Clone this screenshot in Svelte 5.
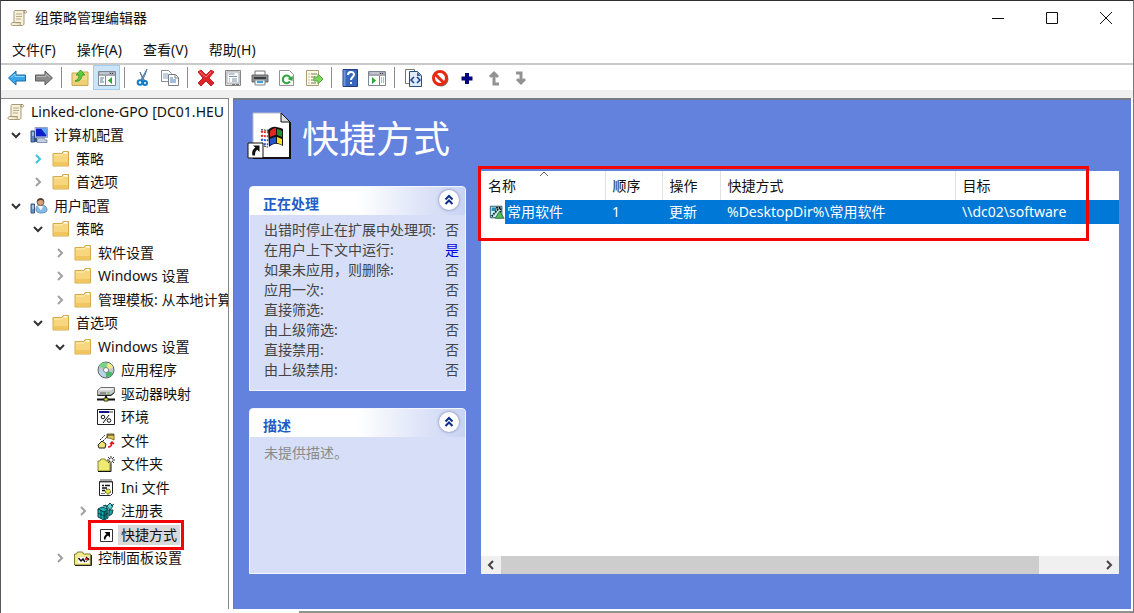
<script lang="ts">
  type Node = { label: string; icon: string; level: number; state?: 'open' | 'closed' | 'hover' };

  const menus = ['文件(F)', '操作(A)', '查看(V)', '帮助(H)'];

  const tools = [
    [['back', '后退'], ['forward', '前进']],
    [['up-folder', '上一级'], ['tree-pane', '显示/隐藏控制台树']],
    [['cut', '剪切'], ['copy', '复制']],
    [['delete', '删除'], ['props', '属性'], ['print', '打印'], ['refresh', '刷新'], ['export', '导出列表']],
    [['help', '帮助'], ['action-pane', '显示/隐藏操作窗格']],
    [['xml', '显示 XML'], ['stop', '禁用'], ['plus', '新建'], ['move-up', '上移'], ['move-down', '下移']]
  ];

  const tree: Node[] = [
    { label: 'Linked-clone-GPO [DC01.HEU', icon: 'scroll', level: 0 },
    { label: '计算机配置', icon: 'computer', level: 1, state: 'open' },
    { label: '策略', icon: 'folder', level: 2, state: 'hover' },
    { label: '首选项', icon: 'folder', level: 2, state: 'closed' },
    { label: '用户配置', icon: 'user', level: 1, state: 'open' },
    { label: '策略', icon: 'folder', level: 2, state: 'open' },
    { label: '软件设置', icon: 'folder', level: 3, state: 'closed' },
    { label: 'Windows 设置', icon: 'folder', level: 3, state: 'closed' },
    { label: '管理模板: 从本地计算', icon: 'folder', level: 3, state: 'closed' },
    { label: '首选项', icon: 'folder', level: 2, state: 'open' },
    { label: 'Windows 设置', icon: 'folder', level: 3, state: 'open' },
    { label: '应用程序', icon: 'disc', level: 4 },
    { label: '驱动器映射', icon: 'drive', level: 4 },
    { label: '环境', icon: 'env', level: 4 },
    { label: '文件', icon: 'file', level: 4 },
    { label: '文件夹', icon: 'new-folder', level: 4 },
    { label: 'Ini 文件', icon: 'ini', level: 4 },
    { label: '注册表', icon: 'registry', level: 4, state: 'closed' },
    { label: '快捷方式', icon: 'shortcut', level: 4 },
    { label: '控制面板设置', icon: 'control', level: 3, state: 'closed' }
  ];

  const processing = [
    ['出错时停止在扩展中处理项:', '否'],
    ['在用户上下文中运行:', '是'],
    ['如果未应用，则删除:', '否'],
    ['应用一次:', '否'],
    ['直接筛选:', '否'],
    ['由上级筛选:', '否'],
    ['直接禁用:', '否'],
    ['由上级禁用:', '否']
  ];

  let selected = $state(18);
  let showProcessing = $state(true);
  let showDescription = $state(true);
</script>

{#snippet icon(name: string)}
  <svg class="icon" viewBox="0 0 18 18" aria-hidden="true">
    {#if name === 'scroll'}
      <path d="M5 1.5h10.5c1.5 0 1.8 2.5 0 2.5h-1.500v10c0 2-1 2.500-2 2.500H2.500c-2 0-1.800-3 0-3H4V3.500c0-1.200.4-2 1-2z" fill="#f6efd9" stroke="#a99b78" />
      <path d="M2.500 13.500h8c-.6 1.500 0 3 1 3" fill="#e4d8b5" stroke="#a99b78" />
      <path d="M6 5h6M6 7.500h6M6 10h5" stroke="#b9ac8a" />
      <path d="M14 4V2.500c0-.6.6-1 1.200-1" fill="none" stroke="#7d7460" />
    {:else if name === 'folder'}
      <path d="M1 3.500h9l1-2h5.500v14.500H1z" fill="#f7d67d" stroke="#d4aa4b" />
      <path d="M2 5h8l1.500-1.500H16" fill="none" stroke="#fff0bc" />
      <path d="M2 12h14v3.500H2z" fill="#f0c660" />
      <path d="M12 2.500h3" stroke="#fff" />
    {:else if name === 'computer'}
      <path d="M5 1.500h12.500v10H5z" fill="#d9e3f0" stroke="#8fa2c4" />
      <path d="M6 2.500h10.500v8H6z" fill="#0b20c8" />
      <path d="M11 2.500h5.500v7z" fill="#5daeff" />
      <path d="M8 12h6l1 2h2v2.500H7V13h1z" fill="#c3cfdf" stroke="#8495b3" />
      <path d="M1 5h3.500v11H1z" fill="#5e85bb" stroke="#324f80" />
      <path d="M2 7h2M2 9h2" stroke="#dcecff" />
      <path d="M5 12h2v4H5z" fill="#38527b" />
    {:else if name === 'user'}
      <path d="M6 13c0-4 2-5 5-5s6 1.500 6 5c0 4-11 4-11 0z" fill="#8ab8e4" stroke="#5d92c4" />
      <circle cx="10.500" cy="5" r="3.500" fill="#d1a279" stroke="#806450" />
      <path d="M7 5c0-5 7.500-5 7 0-1-2-4-3-7 0z" fill="#493a31" />
      <path d="M1 7h3.500v9H1z" fill="#6993c4" stroke="#365983" />
      <path d="M2 9h2M2 11h2" stroke="#e7f4ff" />
      <path d="m8 9 3 4 2-4" fill="#fff" stroke="#d8edff" />
    {:else if name === 'disc'}
      <circle cx="9" cy="9" r="8" fill="#bdc8cb" stroke="#59666a" />
      <path d="M9 9 2 5c2-4 6-4 8-3z" fill="#73d487" />
      <path d="m9 9 2-7c4 1 5 4 5 5z" fill="#eee985" />
      <path d="m9 9 7 3c-2 4-5 4-7 4z" fill="#49b764" />
      <path d="m9 9-1 7c-4-1-6-4-6-6z" fill="#b6d4ea" />
      <circle cx="9" cy="9" r="2.500" fill="#fff" stroke="#78858a" />
    {:else if name === 'drive'}
      <path d="m4 2.500-3.500 3v4.500h13.500l3.500-3V2.500z" fill="#c9c9c9" stroke="#6c6c6c" />
      <path d="m4 3-2.500 2.500H14L17 3z" fill="#eee" />
      <path d="M.5 10.500H14l3.500-3" fill="none" stroke="#222" />
      <path d="M3 8h6" stroke="#555" /><path d="M10.500 8h2" stroke="#20b720" />
      <path d="M9 11v3M0 14.500h18" stroke="#111" stroke-width="2" />
      <path d="M7 13h4v3H7z" fill="#d8d833" stroke="#333" />
    {:else if name === 'env'}
      <path d="M.5 1.500h17v15H.5z" fill="#fff" stroke="#222" />
      <path d="M2 3h10v2H2z" fill="#10108c" /><path d="M12 3h4v2h-4z" fill="#999" />
      <path d="m12 7-6 8" stroke="#111" /><circle cx="6" cy="9" r="1.800" fill="none" stroke="#111" /><circle cx="12" cy="12.500" r="1.800" fill="none" stroke="#111" />
    {:else if name === 'file'}
      <path d="M1 13 5 9l4 3-1 4H2z" fill="#eee577" stroke="#222" />
      <path d="M10 2h7v6l-4-2h-3z" fill="#e7cf55" stroke="#806b25" />
      <path d="m3 8 5-5M6 9l5-5" fill="none" stroke="#222" stroke-dasharray="2 1" />
      <path d="M11 15c4 0 4-3 4-5m-2 2 2-2 2 2" fill="none" stroke="#e01313" stroke-width="1.500" />
      <path d="M10 3h7" stroke="#333" />
    {:else if name === 'new-folder'}
      <path d="M1 6h2l1-2h4l1 2h4v10H1z" fill="#eeea75" stroke="#88872c" />
      <path d="M1 16.500h13V9" fill="none" stroke="#111" />
      <path d="M14 1v8M10 5h8M11 2l6 6M17 2l-6 6" stroke="#333" />
      <circle cx="14" cy="5" r="1.500" fill="#fff" />
    {:else if name === 'ini'}
      <path d="M2.500 2.500h13v12l-2 2h-11z" fill="#fff" stroke="#222" />
      <path d="M4 0v4M6 0v4M8 0v4M10 0v4M12 0v4M14 0v4" stroke="#555" />
      <path d="M5 6.500h2M8 6.500h5M5 9h5M5 11.500h3" stroke="#111" stroke-width="1.500" />
      <circle cx="11" cy="12.500" r="2.500" fill="#e6e33c" stroke="#333" stroke-dasharray="2 1" /><path d="M4 14.500h4" stroke="#777" />
    {:else if name === 'registry'}
      <path d="m1 7 4-2 6 2v9l-4 2-6-3z" fill="#18b5b5" stroke="#063f45" />
      <path d="M7 10 11 7v9l-4 2z" fill="#0c6f76" />
      <path d="m1 7 6 3 4-3M7 10v8M4 8v8M1 11l6 3 4-3" fill="none" stroke="#053c42" />
      <path d="m10 4 3-3 3 3-3 4z" fill="#5ed7d7" stroke="#134c52" />
      <path d="m14 4 3-2M12 8l4 0-1 4-3 2z" fill="#18a5a5" stroke="#084a50" />
      <path d="m6 4 3-1 1 3" fill="#18a5a5" stroke="#084a50" />
    {:else if name === 'shortcut'}
      <path d="M3.500 3.500h12v12h-12z" fill="#fff" stroke="#333" />
      <path d="M7.500 6H13v5.500l-2-2c-1.500 1-2.500 2-2.500 4H7c-.5-2.500.5-4 2.500-5.500z" fill="#000" />
    {:else if name === 'control'}
      <path d="M.5 5h2l1-2h5l1 2h7v11H.5z" fill="#f3ea8a" stroke="#7d7a35" />
      <path d="M1 16.500h16.500V6" fill="none" stroke="#222" />
      <path d="M4 8h11v6H4z" fill="#fff" />
      <path d="m4.500 9 2.500 3 2-2 2 3M12 8l3 3" fill="none" stroke="#111" stroke-width="1.500" />
      <path d="M11 9h2v2h-2z" fill="#df2727" /><path d="m12 13 3-4" stroke="#333" />
    {:else if name === 'back' || name === 'forward'}
      {#if name === 'back'}
        <path d="M0.500 9 8 2v4h9.500v6H8v4z" fill="#37a5e8" stroke="#1b6da9" />
        <path d="M3 8.500 7 5v2.500h9.500" fill="none" stroke="#8ed5fb" />
      {:else}
        <path d="M17.500 9 10 2v4H.5v6H10v4z" fill="#8b8b8b" stroke="#5c5c5c" />
        <path d="M15 8.500 11 5v2.500H1.500" fill="none" stroke="#b9b9b9" />
      {/if}
    {:else if name === 'up-folder'}
      <path d="M1 4h7l1-1h8v13.500H1z" fill="#f3d98a" stroke="#c9a654" />
      <path d="M2 11h14v5H2z" fill="#eecf74" />
      <path d="M4 12c3-1 4-3 4-6H5l4.500-5L14 6h-3c0 4-3 7-7 6z" fill="#5fce3e" stroke="#3d9c2c" />
    {:else if name === 'tree-pane' || name === 'action-pane'}
      <path d="M.5 2.500h17v14H.5z" fill="#fff" stroke="#7c8590" />
      <path d="M1 3h16v4H1z" fill="#a1a9b3" /><path d="M2 4h9" stroke="#dce1e6" /><path d="M12 4.500h4" stroke="#444" stroke-dasharray="1 1" />
      {#if name === 'tree-pane'}
        <path d="M7.500 7v9" stroke="#7c8590" /><path d="M2 9h4M2 11h3M2 13h4" stroke="#55799e" /><path d="M14 8v7l-4-3.500z" fill="#2ca630" />
      {:else}
        <path d="M11.500 7v9" stroke="#7c8590" /><path d="M13 9h3M13 11h3M13 13h3" stroke="#397ab6" stroke-dasharray="1 1" /><path d="M4 8v7l4-3.500z" fill="#2ca630" />
      {/if}
    {:else if name === 'cut'}
      <path d="m13 0-2 6-3 6-1-1zM6 3l2 4 3 5-2-1z" fill="#8cacc7" stroke="#567c9d" />
      <circle cx="6" cy="13.500" r="2.300" fill="none" stroke="#147bc9" stroke-width="2" /><circle cx="11" cy="14" r="2" fill="none" stroke="#147bc9" stroke-width="2" />
    {:else if name === 'copy'}
      <path d="M.5 1.500h7l3 3v8H.5z" fill="#fff" stroke="#8b8f94" /><path d="M2 5h5M2 7h5M2 9h5" stroke="#85a0c4" />
      <path d="M7.500 5.500h7l3 3v8h-10z" fill="#fff" stroke="#777d84" /><path d="M14 5.500V9h3" fill="none" stroke="#777d84" /><path d="M9 9h3M9 11h6M9 13h6" stroke="#477bb9" />
    {:else if name === 'delete'}
      <path d="m1 3 3-2 5 5 5-5 3 2-5 6 5 5-3 3-5-5-5 5-3-3 5-5z" fill="#df2429" stroke="#c22529" /><path d="m3 3 6 5 5-5" fill="none" stroke="#f67a7c" />
    {:else if name === 'props'}
      <path d="M1.500 1.500h15v15h-15z" fill="#ddd" stroke="#858585" /><path d="M3 3h12v11H3z" fill="#fff" stroke="#aaa" />
      <path d="M4.500 5h6M5 7.500h8M5 10h1M8 10h5M5 12h1M8 12h5" stroke="#778fa6" /><path d="M8 15.500h3M12 15.500h3" stroke="#777" />
    {:else if name === 'print'}
      <path d="M4 2h10v5H4z" fill="#fff" stroke="#777" /><path d="M1 6h16v7H1z" fill="#8b8f91" stroke="#65696b" /><path d="M3 8h12v2H3z" fill="#393c3e" />
      <path d="M4 11h10v5H4z" fill="#eaf5fc" stroke="#888" /><path d="M6 13h6" stroke="#409dd5" stroke-width="2" />
    {:else if name === 'refresh' || name === 'export'}
      {#if name === 'refresh'}
        <path d="M1.500 1.500h10l4 4v11h-14z" fill="#fff" stroke="#939393" />
        <path d="M12 12.500c-3 3.500-8 1-7-3 1-4 6-4 7.500 0" fill="none" stroke="#34a341" stroke-width="2" /><path d="m9.500 10 5 2 .5-5z" fill="#34a341" />
      {:else}
        <path d="M1.500 1.500h12v15h-12z" fill="#fffbe2" stroke="#a99e78" /><path d="M3.500 5h1M3.500 8h1M3.500 11h1M3.500 14h1M6 5h6M6 8h4M6 11h4M6 14h5" stroke="#777" /><path d="M9 8h4V5l5 5-5 5v-3H9z" fill="#7fd45f" stroke="#55ad42" />
      {/if}
    {:else if name === 'help'}
      <path d="M2 .5h14.500v17H2z" fill="#3866bd" stroke="#203b82" /><path d="M2.500 1h2v16h-2z" fill="#6e96df" />
      <path d="M7 6c0-4 6-4 6-.5 0 2.500-3 2.500-3 5.500" fill="none" stroke="#fff" stroke-width="2" /><path d="M9 13h2v2H9z" fill="#fff" />
    {:else if name === 'xml'}
      <path d="M1.500.5h9v14h-9z" fill="#fff" stroke="#777" /><path d="M5.500 2.500h8l4 4v11h-12z" fill="#dceafb" stroke="#235383" /><path d="M13 3v4h4z" fill="#32699c" />
      <path d="m10 8-3 3 3 3m3-6 3 3-3 3" fill="none" stroke="#143f9b" stroke-width="1.500" />
    {:else if name === 'stop'}
      <circle cx="10" cy="10" r="7.500" fill="#777" /><circle cx="9" cy="9" r="6.500" fill="#fff" stroke="#e32a12" stroke-width="3" /><path d="m4 5 9 9" stroke="#e32a12" stroke-width="3" />
    {:else if name === 'plus'}
      <path d="M9 4v11M3.500 9.500h11" stroke="#000080" stroke-width="4" />
    {:else if name === 'move-up'}
      <path d="M14 15H9V5M5 8l4-4 4 4" fill="none" stroke="#929292" stroke-width="3" />
    {:else if name === 'move-down'}
      <path d="M4 4h5v10M5 10l4 4 4-4" fill="none" stroke="#929292" stroke-width="3" />
    {:else if name === 'item'}
      <path d="M1.500 2.500h13v13h-13z" fill="#c9f0f2" stroke="#174b63" />
      <path d="M3 4h5v4H3zM9 11h5v4H9z" fill="#2689ad" /><path d="M3 14 12 4M8 4h5v5" fill="none" stroke="#111" stroke-width="2" stroke-dasharray="2 1" /><path d="m12 8 5 8H7z" fill="#58b958" stroke="#26753b" />
    {/if}
  </svg>
{/snippet}

{#snippet panelHead(title: string, open: boolean, toggle: () => void)}
  <header class="panel-head">
    <h2>{title}</h2>
    <button class="collapse" aria-label={title} aria-expanded={open} onclick={toggle}>
      <svg viewBox="0 0 20 20" aria-hidden="true"><path d="m6.500 9.500 3.500-3.500 3.500 3.500M6.500 14l3.500-3.500 3.500 3.500" /></svg>
    </button>
  </header>
{/snippet}

<div class="window">
  <header class="titlebar">
    {@render icon('scroll')}
    <h1>组策略管理编辑器</h1>
    <div class="controls">
      <button aria-label="最小化"><svg viewBox="0 0 12 12"><path d="M0 6.500h12" /></svg></button>
      <button aria-label="最大化"><svg viewBox="0 0 12 12"><path d="M.5.5h11v11H.5z" /></svg></button>
      <button aria-label="关闭"><svg viewBox="0 0 12 12"><path d="m0 0 12 12M12 0 0 12" /></svg></button>
    </div>
  </header>

  <nav class="menubar">
    {#each menus as menu}
      <button>{menu}</button>
    {/each}
  </nav>

  <div class="toolbar">
    {#each tools as group}
      <div class="tool-group">
        {#each group as [name, label]}
          <button class:pressed={name === 'tree-pane'} aria-label={label}>{@render icon(name)}</button>
        {/each}
      </div>
    {/each}
  </div>

  <main>
    <nav class="tree-pane">
      <ul class="tree">
        {#each tree as node, i}
          <li class="level-{node.level}">
            {#if node.level > 0}
              <span class="chevron {node.state ?? ''}">
                {#if node.state}
                  <svg viewBox="0 0 12 12" aria-hidden="true"><path d="m4 2 4 4-4 4" /></svg>
                {/if}
              </span>
            {/if}
            <button class="node" class:selected={selected === i} onclick={() => (selected = i)}>
              {@render icon(node.icon)}
              <span class="label">{node.label}</span>
              {#if node.icon === 'shortcut'}<span class="mark"></span>{/if}
            </button>
          </li>
        {/each}
      </ul>
    </nav>

    <section class="detail">
      <header class="banner">
        <svg viewBox="0 0 44 48" aria-hidden="true">
          <path d="M6 1h28l9 9v36H6z" fill="#fff" stroke="#b8bccb" />
          <path d="M43 10v36H6" fill="none" stroke="#111" stroke-width="2" />
          <path d="M34 1v9h9z" fill="#ddd" stroke="#111" />
          <path d="M21 18c5-5 9-3 15-1v17c-6-3-9-3-14 1z" fill="#111" />
          <path d="M23 19c2-2 4-3 6-3v7c-2 0-4 1-6 2z" fill="#e52620" />
          <path d="M30 17c2 0 3 1 5 2v6l-5-2z" fill="#268b35" />
          <path d="M23 27c2-1 4-2 6-2v6c-2 0-4 1-6 2z" fill="#2855ce" />
          <path d="m30 25 5 2v6c-2-1-3-2-5-2z" fill="#f6df25" />
          <path d="M14 20c3-1 4 1 7 0M14 24c3-1 4 1 7 0" fill="none" stroke="#e52620" stroke-width="2" stroke-dasharray="2 1" />
          <path d="M14 28c3-1 4 1 7 0M14 32c3-1 4 1 7 0" fill="none" stroke="#2855ce" stroke-width="2" stroke-dasharray="2 1" />
          <path d="M14 18c3-1 4 1 7 0M14 34c3-1 4 1 7 1" fill="none" stroke="#111" stroke-dasharray="2 1" />
          <path d="M1 31h15v15H1z" fill="#fff" stroke="#111" />
          <path d="M6 33.500h6.500V40l-2.200-2.200C8.500 39 8 41 8 43.500H5.500c-1-3.500 0-6 2.800-8z" fill="#111" />
        </svg>
        <h2>快捷方式</h2>
      </header>

      <div class="columns">
        <aside>
          <section class="panel">
            {@render panelHead('正在处理', showProcessing, () => (showProcessing = !showProcessing))}
            {#if showProcessing}
              <dl>
                {#each processing as [key, value]}
                  <div>
                    <dt>{key}</dt>
                    <dd class:yes={value === '是'}>{value}</dd>
                  </div>
                {/each}
              </dl>
            {/if}
          </section>
          <section class="panel grow">
            {@render panelHead('描述', showDescription, () => (showDescription = !showDescription))}
            {#if showDescription}
              <p>未提供描述。</p>
            {/if}
          </section>
        </aside>

        <div class="list">
          <table>
            <colgroup>
              <col class="c-name" /><col class="c-order" /><col class="c-action" /><col class="c-path" /><col />
            </colgroup>
            <thead>
              <tr>
                <th class="sorted">名称<svg viewBox="0 0 10 6" aria-hidden="true"><path d="m1 5 4-4 4 4" /></svg></th>
                <th>顺序</th>
                <th>操作</th>
                <th>快捷方式</th>
                <th>目标</th>
              </tr>
            </thead>
            <tbody>
              <tr>
                <td class="name"><div>{@render icon('item')}<span>常用软件</span></div></td>
                <td>1</td>
                <td>更新</td>
                <td>%DesktopDir%\常用软件</td>
                <td>\\dc02\software</td>
              </tr>
            </tbody>
          </table>
          <div class="scrollbar">
            <button aria-label="向左滚动"><svg viewBox="0 0 10 10"><path d="M7 1 3 5l4 4" /></svg></button>
            <div class="track"><div class="thumb"></div></div>
            <button aria-label="向右滚动"><svg viewBox="0 0 10 10"><path d="m3 1 4 4-4 4" /></svg></button>
          </div>
          <div class="mark"></div>
        </div>
      </div>
    </section>
  </main>
  <footer></footer>
</div>

<style>
  :global(body) {
    background: #fff;
    color: #111;
    font: 14px/20px 'Noto Sans', 'Noto Sans CJK SC', sans-serif;
  }

  button {
    border: 0;
    padding: 0;
    background: none;
    color: inherit;
    font: inherit;
  }

  h1, h2, p, dl, dd, ul { margin: 0; padding: 0; font-weight: normal; }

  svg { display: block; flex: none; }

  .icon { width: 18px; height: 18px; }

  .window {
    box-sizing: border-box;
    min-height: 100vh;
    display: flex;
    flex-direction: column;
    border-top: 1px solid #2f2d2f;
    border-left: 1px solid #55585f;
    border-right: 1px solid #777;
  }

  .titlebar {
    display: flex;
    align-items: center;
    height: 34px;
    padding-left: 9px;
  }

  .titlebar h1 {
    margin-left: 7px;
    font-size: 14px;
  }

  .controls {
    display: flex;
    margin-left: auto;
  }

  .controls button {
    display: grid;
    place-items: center;
    width: 54px;
    height: 34px;
  }

  .controls svg {
    width: 12px;
    height: 12px;
    fill: none;
    stroke: #111;
  }

  .menubar {
    display: flex;
    gap: 21px;
    padding: 5px 11px 3px;
    border-bottom: 2px solid #cacaca;
  }

  .toolbar {
    display: flex;
    padding-left: 2px;
    border-bottom: 8px solid #efefef;
  }

  .tool-group {
    display: flex;
  }

  .tool-group + .tool-group::before {
    content: '';
    width: 1px;
    height: 21px;
    margin: 2px 4px;
    background: #8c8c8c;
  }

  .toolbar button {
    display: grid;
    place-items: center;
    width: 27px;
    height: 25px;
  }

  .toolbar .pressed {
    background: #cce4f7;
    box-shadow: inset 0 0 0 1px #a5cdec;
  }

  main {
    flex: 1;
    display: flex;
    min-height: 0;
  }

  .tree-pane {
    box-sizing: border-box;
    width: 228px;
    overflow: hidden;
    border: 1px solid #888;
    border-width: 1px 1px 0 0;
  }

  .tree {
    display: grid;
    grid-auto-rows: 1fr;
    height: 470px;
    padding-top: 1px;
    list-style: none;
  }

  .tree li {
    display: flex;
    align-items: center;
    padding-left: 7px;
  }

  .tree .level-0 { padding-left: 6px; }
  .tree .level-2 { padding-left: 29px; }
  .tree .level-3 { padding-left: 51px; }
  .tree .level-4 { padding-left: 74px; }

  .chevron {
    width: 16px;
    margin-right: 6px;
  }

  .chevron svg {
    width: 12px;
    height: 12px;
    margin: auto;
    fill: none;
    stroke: #a0a0a0;
    stroke-width: 2;
  }

  .chevron.open svg {
    transform: rotate(90deg);
    stroke: #333;
  }

  .chevron.hover svg { stroke: #33c5ee; }

  .node {
    position: relative;
    display: flex;
    align-items: center;
    gap: 6px;
    white-space: nowrap;
  }

  .selected .label {
    background: #d9d9d9;
    box-shadow: -3px 0 #d9d9d9, 3px 0 #d9d9d9;
  }

  .mark {
    position: absolute;
    border: 3px solid #f20505;
    pointer-events: none;
  }

  .node .mark { inset: -5px -7px -5px -9px; }

  .detail {
    flex: 1;
    display: flex;
    flex-direction: column;
    min-width: 0;
    margin: 0 2px 0 4px;
    padding: 0 12px 35px 15px;
    border-top: 2px solid #777b83;
    border-left: 1px solid #777b83;
    background: #6282de;
  }

  .banner {
    display: flex;
    align-items: center;
    gap: 11px;
    height: 71px;
    margin-left: -2px;
    color: #fff;
  }

  .banner svg {
    width: 44px;
    height: 48px;
  }

  .banner h2 {
    padding-top: 6px;
    font-size: 37px;
    line-height: 48px;
  }

  .columns {
    flex: 1;
    display: flex;
    gap: 15px;
  }

  aside {
    display: flex;
    flex-direction: column;
    gap: 17px;
    width: 217px;
    padding-top: 15px;
  }

  .panel {
    box-sizing: border-box;
    border: 1px solid #f4f6fd;
    border-radius: 4px 4px 0 0;
    background: #d6dff7;
  }

  .grow { flex: 1; }

  .panel-head {
    display: flex;
    align-items: center;
    justify-content: space-between;
    height: 28px;
    padding: 0 6px 0 13px;
    border-radius: 3px 3px 0 0;
    background: linear-gradient(90deg, #fff 50%, #c8d3f3);
  }

  .panel-head h2 {
    padding-top: 5px;
    color: #215dc6;
    font-size: 14px;
    font-weight: bold;
  }

  .collapse {
    width: 20px;
    height: 20px;
    margin-bottom: 3px;
    border-radius: 50%;
    background: #fff;
    box-shadow: 0 0 2px 1px #a3aed2;
  }

  .collapse svg {
    fill: none;
    stroke: #0b2e88;
    stroke-width: 2;
  }

  dl { padding: 5px 6px 10px 14px; color: #444; }

  dl div {
    display: flex;
    justify-content: space-between;
    white-space: nowrap;
  }

  .yes { color: #0000e0; }

  .panel p {
    padding: 6px 14px;
    color: #8a8a8a;
  }

  .list {
    position: relative;
    flex: 1;
    display: flex;
    flex-direction: column;
    justify-content: space-between;
    min-width: 0;
    background: #fff;
  }

  .list > .mark { inset: -5px 30px auto -3px; height: 69px; }

  table {
    width: 100%;
    table-layout: fixed;
    border-collapse: collapse;
  }

  .c-name { width: 124px; }
  .c-order { width: 57px; }
  .c-action { width: 58px; }
  .c-path { width: 235px; }

  th, td {
    box-sizing: border-box;
    padding: 0 7px;
    text-align: left;
    font-weight: normal;
    white-space: nowrap;
  }

  th {
    position: relative;
    height: 29px;
    border-right: 1px solid #e2e2e2;
  }

  th:last-child { border-right: 0; }

  .sorted svg {
    position: absolute;
    top: 0;
    left: 58px;
    width: 10px;
    height: 6px;
    fill: none;
    stroke: #666;
  }

  td {
    height: 24px;
    background: #0078d7;
    color: #fff;
  }

  td.name {
    padding: 0 0 0 8px;
    background: #fff;
  }

  .name div {
    display: flex;
    align-items: center;
  }

  .name .icon { width: 16px; height: 16px; }

  .name span {
    flex: 1;
    padding-left: 2px;
    background: #0078d7;
    line-height: 24px;
  }

  .scrollbar {
    display: flex;
    height: 18px;
    background: #f0f0f0;
  }

  .scrollbar button {
    display: grid;
    place-items: center;
    width: 20px;
  }

  .scrollbar svg {
    width: 10px;
    height: 10px;
    fill: none;
    stroke: #444;
    stroke-width: 2;
  }

  .track { flex: 1; }

  .thumb {
    width: 90%;
    height: 100%;
    background: #cdcdcd;
  }

  footer {
    height: 2px;
    margin-left: 298px;
    border-top: 2px solid #fff;
    background: #929292;
  }
</style>
